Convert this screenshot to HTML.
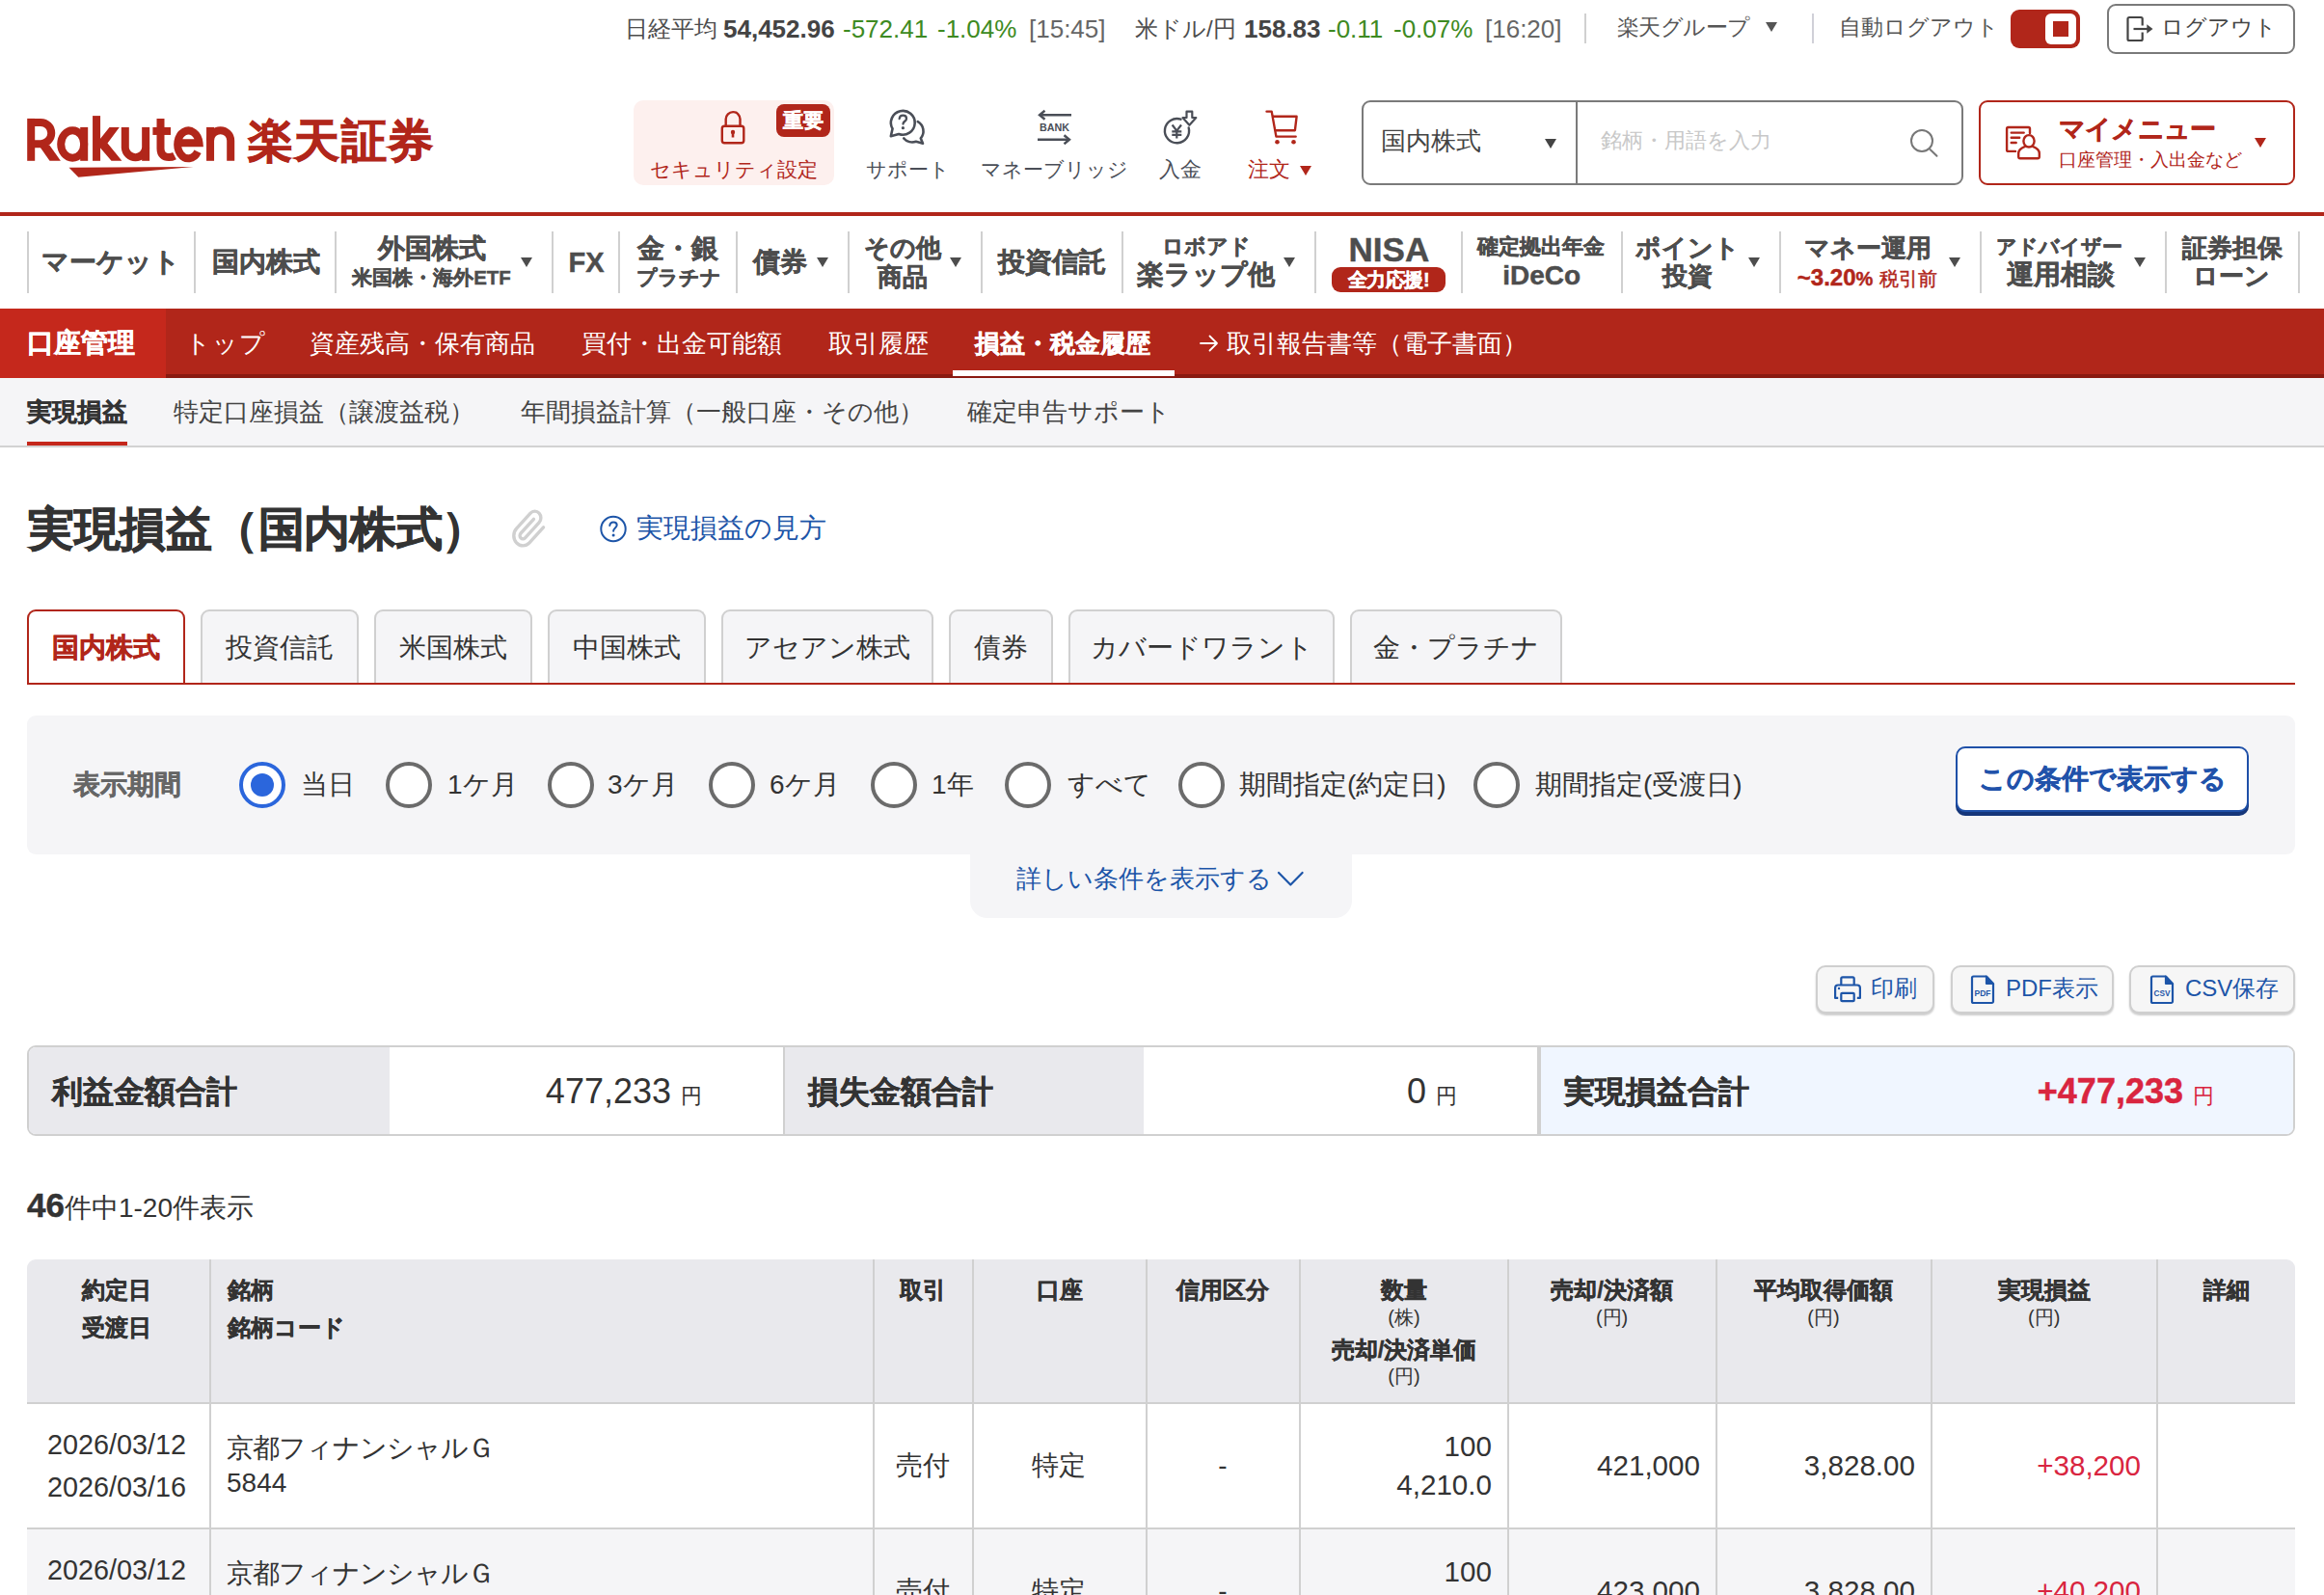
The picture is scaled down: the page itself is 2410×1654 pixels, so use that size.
<!DOCTYPE html>
<html lang="ja">
<head>
<meta charset="utf-8">
<title>実現損益（国内株式）</title>
<style>
html,body{margin:0;padding:0}
body{width:2410px;height:1654px;position:relative;overflow:hidden;background:#fff;font-family:"Liberation Sans",sans-serif;color:#333;-webkit-font-smoothing:antialiased}
.a{position:absolute;white-space:nowrap;margin:0;padding:0}
b,.b,.gn,.th{font-weight:bold;-webkit-text-stroke:.45px}
svg{position:absolute;overflow:visible}
/* ticker */
.tk{top:14px;height:32px;line-height:32px;font-size:26px;color:#4d4d4d}
.tk.j{font-size:24px}
.tk.g{color:#3d8a22}
.tk.t{color:#666}
.tk.n{color:#444;font-weight:bold}
.tr{top:11.500px;height:32px;line-height:32px;font-size:23px;color:#555}
/* header */
.hl{top:158px;height:36px;line-height:36px;font-size:22px;color:#4a4e57;text-align:center}
.red{color:#b1261a}
/* gnav */
.gs{top:240px;width:2px;height:64px;background:#d0d0d0}
.gn{font-weight:bold;color:#4d4d4d;text-align:center;line-height:30px}
.tri{width:0;height:0;border-left:6px solid transparent;border-right:6px solid transparent;border-top:10px solid #4d4d4d}
/* account nav */
.an{top:338px;height:36px;line-height:36px;font-size:26px;color:#fff}
.sn{top:409px;height:36px;line-height:36px;font-size:26px;color:#444}

/* main */
.tab{top:632px;height:74px;border:2px solid #d0d0d0;border-bottom:none;border-radius:9px 9px 0 0;background:#f5f5f7;font-size:28px;line-height:76px;text-align:center;color:#333;box-sizing:content-box}
.rad{top:790px;width:40px;height:40px;border:4px solid #6b6b6b;border-radius:50%;background:#fff}
.rl{top:796px;height:36px;line-height:36px;font-size:28px;color:#333}
.btn{top:1001px;height:46px;border:2px solid #cfcfcf;border-radius:10px;background:#f6f6f6;box-shadow:0 2px 2px rgba(0,0,0,.2)}
.bt{top:1007px;height:36px;line-height:36px;font-size:24px;color:#1d55a8}
.th{font-weight:bold;font-size:24px;color:#333;line-height:36px;height:36px}
.thu{font-size:20px;color:#333;line-height:28px;height:28px}
.vs{width:2px;background:#d0d0d0;top:1306px;height:348px}
.td{font-size:28px;color:#333;line-height:40px;height:40px}
.nm{font-size:29.600px}
.dt{font-size:28.800px}
.pl{color:#d9253f}
</style>
</head>
<body>

<!-- ===== top ticker ===== -->
<div class="a tk j" style="left:647.500px">日経平均</div>
<div class="a tk n" style="left:750px">54,452.96</div>
<div class="a tk g" style="left:874px">-572.41</div>
<div class="a tk g" style="left:972px">-1.04%</div>
<div class="a tk t" style="left:1067px">[15:45]</div>
<div class="a tk j" style="left:1177px">米ドル/円</div>
<div class="a tk n" style="left:1290px">158.83</div>
<div class="a tk g" style="left:1377px">-0.11</div>
<div class="a tk g" style="left:1445px">-0.07%</div>
<div class="a tk t" style="left:1540px">[16:20]</div>
<div class="a" style="left:1643px;top:14px;width:2px;height:31px;background:#d0d0d0"></div>
<div class="a tr" style="left:1677px;letter-spacing:-0.600px">楽天グループ</div>
<div class="a tri" style="left:1831px;top:23px;border-top-color:#555"></div>
<div class="a" style="left:1879px;top:14px;width:2px;height:31px;background:#d0d0d8"></div>
<div class="a tr" style="left:1907px">自動ログアウト</div>
<div class="a" style="left:2085px;top:10px;width:72px;height:40px;border-radius:9px;background:#b1261a"></div>
<div class="a" style="left:2121px;top:14px;width:32px;height:32px;border-radius:6px;background:#fff"></div>
<div class="a" style="left:2129px;top:22px;width:16px;height:16px;background:#b1261a"></div>
<div class="a" style="left:2185px;top:4px;width:191px;height:48px;border:2px solid #7a7a7a;border-radius:9px;background:#fff"></div>
<svg style="left:2204px;top:15px" width="30" height="30" viewBox="0 0 30 30" fill="none" stroke="#444" stroke-width="2.200" stroke-linecap="butt" stroke-linejoin="round"><path d="M17.700 11.500V4.500a1.500 1.500 0 0 0-1.500-1.500H4a1.500 1.500 0 0 0-1.500 1.500v21a1.500 1.500 0 0 0 1.500 1.500h12.200a1.500 1.500 0 0 0 1.500-1.500V18.500"/><path d="M8.500 15h15"/><path d="M22.300 10.200l6.200 4.800-6.200 4.800z" fill="#444" stroke="none"/></svg>
<div class="a tr" style="left:2241px;color:#444">ログアウト</div>

<!-- ===== logo ===== -->
<svg style="left:0;top:100px" width="470" height="100" viewBox="0 100 470 100" role="img" aria-label="Rakuten"><title>Rakuten</title>
  <g fill="none" stroke="#b1261a" stroke-width="8" stroke-linecap="butt" stroke-linejoin="miter">
    <path d="M32.200 122.900V166.800"/><path d="M32.200 126.900H42.100A11.150 11.150 0 0 1 42.100 149.200H32.200"/>
    <ellipse cx="75.200" cy="149.500" rx="12" ry="14.200"/><path d="M87.200 131.900V166.800"/>
    <path d="M100.050 120.100V166.800"/>
    <path d="M129.800 131.900V153.200A10.700 10.700 0 0 0 151.150 153.200"/><path d="M151.150 131.900V166.800"/>
    <path d="M166.500 122.900V154C166.500 160.500 170 163 175 163C177.300 163 179.300 162.500 181 161.600"/><path d="M158.400 135.950H177"/>
    <path d="M186.500 148.200H206.500A11.200 14.400 0 1 0 205 157.300"/>
    <path d="M218.050 131.900V166.800"/><path d="M218.050 145.700A10.575 10.575 0 0 1 239.200 145.700V166.800"/>
  </g>
  <g fill="#b1261a">
    <path d="M40.800 151.500L51.300 150.500L62.900 166.800H51.500z"/>
    <path d="M113.500 131.900H123.800L111.500 148.600L126.400 166.800H115.500L103.900 153.200V144.100z"/>
    <path d="M71.500 173.700L200.500 173L81.300 183.800z"/>
  </g>
</svg>
<div class="a b" style="left:256.500px;top:116px;height:60px;line-height:60px;font-size:47px;color:#b1261a;letter-spacing:1.500px;-webkit-text-stroke:1px #b1261a">楽天証券</div>

<!-- ===== header shortcuts ===== -->
<div class="a" style="left:657px;top:104px;width:208px;height:88px;border-radius:10px;background:#fdf0ee"></div>
<svg style="left:744px;top:112px" width="32" height="40" viewBox="744 112 32 40" fill="none" stroke="#b1261a" stroke-width="2.400"><path d="M752.700 130v-6.500a7.400 7.400 0 0 1 14.800 0V130"/><rect x="748.800" y="130.800" width="22.500" height="17.400" rx="2.500"/><circle cx="760" cy="137" r="2.200" fill="#b1261a" stroke="none"/><path d="M760 138v4.500" stroke-width="2.600"/></svg>
<div class="a b" style="left:805px;top:108px;width:56px;height:34px;border-radius:8px;background:#b1261a;color:#fff;font-size:21px;line-height:33px;text-align:center">重要</div>
<div class="a hl red" style="left:657px;width:208px;font-size:21px">セキュリティ設定</div>

<svg style="left:918px;top:112px" width="44" height="40" viewBox="918 112 44 40" fill="none" stroke="#4a4e57" stroke-width="2.600" stroke-linejoin="round" stroke-linecap="round"><path d="M925.560 133.500A12.400 12.400 0 1 1 932.060 138.950L923.800 141.200z"/><path d="M951.750 126.040A11.500 11.500 0 0 1 954.800 143.400L957 148.700L949.930 146.800A11.500 11.500 0 0 1 937.200 143.400"/><path d="M932.700 123c.2-2 1.700-3.300 3.700-3.300 2.100 0 3.600 1.300 3.600 3.200 0 2.800-3.500 2.900-3.500 5.700" stroke-width="2.300"/><circle cx="936.400" cy="132.700" r="1.600" fill="#4a4e57" stroke="none"/></svg>
<div class="a hl" style="left:891px;width:100px;font-size:21.300px">サポート</div>

<svg style="left:1070px;top:112px" width="48" height="40" viewBox="1070 112 48 40" fill="none" stroke="#4a4e57" stroke-width="2.400"><path d="M1111 119.300h-33"/><path d="M1083.500 114.800l-5.500 4.500 5.500 4.500" /><path d="M1076 144.700h33"/><path d="M1103.500 140.200l5.500 4.500-5.500 4.500"/><text x="1093.400" y="136.300" text-anchor="middle" font-family="Liberation Sans, sans-serif" font-weight="bold" font-size="11.500" fill="#4a4e57" stroke="none" textLength="31" lengthAdjust="spacingAndGlyphs">BANK</text></svg>
<div class="a hl" style="left:1008px;width:170px;font-size:21px">マネーブリッジ</div>

<svg style="left:1200px;top:112px" width="46" height="40" viewBox="1200 112 46 40" fill="none" stroke="#4a4e57" stroke-width="2.400" stroke-linejoin="round"><path d="M1224.500 123.700a12.600 12.600 0 1 0 8.200 8.800" stroke-linecap="round"/><path d="M1215.600 129.500l4.700 6.200 4.700-6.200M1215.300 136.300h10M1215.300 139.800h10M1220.300 135.700v7.800" stroke-width="2.200"/><path d="M1230.500 115.700h5.800v6.300h4l-6.900 7.800-6.900-7.800h4z" stroke-width="2.200"/></svg>
<div class="a hl" style="left:1174px;width:100px">入金</div>

<svg style="left:1308px;top:112px" width="42" height="40" viewBox="1308 112 42 40" fill="none" stroke="#b1261a" stroke-width="2.400" stroke-linejoin="round" stroke-linecap="round"><path d="M1313.500 115.600h5.200l4.700 26h20.300"/><path d="M1320.300 120.800h24.300l-1.700 14.400h-20"/><circle cx="1324.500" cy="147.200" r="2.300" fill="#b1261a" stroke="none"/><circle cx="1341.500" cy="147.200" r="2.300" fill="#b1261a" stroke="none"/></svg>
<div class="a hl red" style="left:1294px;text-align:left">注文</div>
<div class="a tri" style="left:1348px;top:172px;border-top-color:#b1261a"></div>

<!-- search -->
<div class="a" style="left:1412px;top:104px;width:620px;height:84px;border:2px solid #7a7a7a;border-radius:9px;background:#fff"></div>
<div class="a" style="left:1634px;top:104px;width:2px;height:88px;background:#7a7a7a"></div>
<div class="a" style="left:1432px;top:128px;height:36px;line-height:36px;font-size:26px;color:#444">国内株式</div>
<div class="a tri" style="left:1602px;top:144px;border-top-color:#444"></div>
<div class="a" style="left:1660px;top:128px;height:36px;line-height:36px;font-size:22px;color:#c8c8c8">銘柄・用語を入力</div>
<svg style="left:1978px;top:132px" width="34" height="34" viewBox="1978 132 34 34" fill="none" stroke="#777" stroke-width="2" stroke-linecap="round"><circle cx="1993" cy="146" r="11"/><path d="M2001.500 155l7 6.800"/></svg>

<!-- my menu -->
<div class="a" style="left:2052px;top:104px;width:324px;height:84px;border:2px solid #b1261a;border-radius:9px;background:#fff"></div>
<svg style="left:2078px;top:128px" width="40" height="40" viewBox="2078 128 40 40" fill="none" stroke="#b1261a" stroke-width="2.400" stroke-linejoin="round" stroke-linecap="round"><path d="M2105 138V133.500a1.500 1.500 0 0 0-1.500-1.500H2082.600a1.500 1.500 0 0 0-1.500 1.500V155.400a1.500 1.500 0 0 0 1.500 1.500H2090"/><path d="M2085.700 137.600h13M2085.700 142.800h8.500M2085.700 148h5"/><ellipse cx="2104" cy="146.300" rx="5.600" ry="6.200"/><path d="M2100 151.800c-3 1.200-6.800 3-6.800 7.200v3.400a1.800 1.800 0 0 0 1.800 1.800h18a1.800 1.800 0 0 0 1.800-1.800v-3.400c0-4.200-3.800-6-6.800-7.200"/></svg>
<div class="a b red" style="left:2135px;top:116px;height:36px;line-height:36px;font-size:26.500px;letter-spacing:-0.800px">マイメニュー</div>
<div class="a red" style="left:2135px;top:152px;height:28px;line-height:28px;font-size:18.700px">口座管理・入出金など</div>
<div class="a tri" style="left:2338px;top:143px;border-top-color:#b1261a"></div>

<!-- red rule -->
<div class="a" style="left:0;top:220px;width:2410px;height:4px;background:#b1261a"></div>

<!-- ===== global nav ===== -->
<div class="a gs" style="left:28px"></div>
<div class="a gs" style="left:201px"></div>
<div class="a gs" style="left:347px"></div>
<div class="a gs" style="left:572px"></div>
<div class="a gs" style="left:641px"></div>
<div class="a gs" style="left:763px"></div>
<div class="a gs" style="left:879px"></div>
<div class="a gs" style="left:1017px"></div>
<div class="a gs" style="left:1163px"></div>
<div class="a gs" style="left:1363px"></div>
<div class="a gs" style="left:1515px"></div>
<div class="a gs" style="left:1681px"></div>
<div class="a gs" style="left:1845px"></div>
<div class="a gs" style="left:2053px"></div>
<div class="a gs" style="left:2245px"></div>
<div class="a gs" style="left:2383px"></div>
<div class="a gn" style="left:-45px;width:320px;top:254px;height:36px;line-height:36px;font-size:28px;">マーケット</div>
<div class="a gn" style="left:115.5px;width:320px;top:254px;height:36px;line-height:36px;font-size:28px;">国内株式</div>
<div class="a gn" style="left:287.5px;width:320px;top:240px;height:36px;line-height:36px;font-size:28px;">外国株式</div>
<div class="a gn" style="left:287.5px;width:320px;top:270px;height:36px;line-height:36px;font-size:20.5px;">米国株・海外ETF</div>
<div class="a tri" style="left:540px;top:267px"></div>
<div class="a gn" style="left:448px;width:320px;top:254px;height:36px;line-height:36px;font-size:29px;">FX</div>
<div class="a gn" style="left:543px;width:320px;top:239.5px;height:36px;line-height:36px;font-size:28px;">金・銀</div>
<div class="a gn" style="left:543.8px;width:320px;top:269.5px;height:36px;line-height:36px;font-size:21px;">プラチナ</div>
<div class="a gn" style="left:649px;width:320px;top:254px;height:36px;line-height:36px;font-size:28px;">債券</div>
<div class="a tri" style="left:847px;top:267px"></div>
<div class="a gn" style="left:776.3px;width:320px;top:238.7px;height:36px;line-height:36px;font-size:26px;">その他</div>
<div class="a gn" style="left:776.4px;width:320px;top:269px;height:36px;line-height:36px;font-size:26px;">商品</div>
<div class="a tri" style="left:985px;top:267px"></div>
<div class="a gn" style="left:931px;width:320px;top:254px;height:36px;line-height:36px;font-size:28px;">投資信託</div>
<div class="a gn" style="left:1091px;width:320px;top:238px;height:36px;line-height:36px;font-size:22px;">ロボアド</div>
<div class="a gn" style="left:1090.7px;width:320px;top:267px;height:36px;line-height:36px;font-size:28px;">楽ラップ他</div>
<div class="a tri" style="left:1331px;top:267px"></div>
<div class="a gn" style="left:1280.4px;width:320px;top:239px;height:40px;line-height:40px;font-size:35px;">NISA</div>
<div class="a b" style="left:1381px;top:277px;width:118px;height:26px;border-radius:9px;background:#b1261a;color:#fff;font-size:20px;line-height:26px;text-align:center;letter-spacing:-0.5px">全力応援!</div>
<div class="a gn" style="left:1438.3px;width:320px;top:238px;height:36px;line-height:36px;font-size:22px;">確定拠出年金</div>
<div class="a gn" style="left:1438.6px;width:320px;top:267.5px;height:36px;line-height:36px;font-size:28px;">iDeCo</div>
<div class="a gn" style="left:1589.7px;width:320px;top:239px;height:36px;line-height:36px;font-size:26px;">ポイント</div>
<div class="a gn" style="left:1590px;width:320px;top:267.7px;height:36px;line-height:36px;font-size:26px;">投資</div>
<div class="a tri" style="left:1813px;top:267px"></div>
<div class="a gn" style="left:1776.7px;width:320px;top:239px;height:36px;line-height:36px;font-size:26px;">マネー運用</div>
<div class="a gn" style="left:1776.4px;width:320px;top:269.7px;height:36px;line-height:36px;font-size:24px;"><span class="red">~3.20<span style="font-size:20px">%</span> <span style="font-weight:normal;font-size:20px">税引前</span></span></div>
<div class="a tri" style="left:2020.5px;top:267px"></div>
<div class="a gn" style="left:1975.5px;width:320px;top:238px;height:36px;line-height:36px;font-size:21px;">アドバイザー</div>
<div class="a gn" style="left:1976.5px;width:320px;top:267.3px;height:36px;line-height:36px;font-size:28px;">運用相談</div>
<div class="a tri" style="left:2213px;top:267px"></div>
<div class="a gn" style="left:2154.8px;width:320px;top:239px;height:36px;line-height:36px;font-size:26px;">証券担保</div>
<div class="a gn" style="left:2153.7px;width:320px;top:267.7px;height:36px;line-height:36px;font-size:26px;">ローン</div>
<!-- ===== account nav ===== -->
<div class="a" style="left:0;top:320px;width:2410px;height:72px;background:#b1261a;box-shadow:inset 0 -4px 0 #8a1a11"></div>
<div class="a" style="left:0;top:320px;width:172px;height:72px;background:#c5281c"></div>
<div class="a an b" style="left:28px;font-size:28px">口座管理</div>
<div class="a an" style="left:192px;letter-spacing:1px">トップ</div>
<div class="a an" style="left:321px">資産残高・保有商品</div>
<div class="a an" style="left:603px">買付・出金可能額</div>
<div class="a an" style="left:859px">取引履歴</div>
<div class="a an b" style="left:1011px">損益・税金履歴</div>
<div class="a" style="left:988px;top:384px;width:230px;height:6px;background:#fff"></div>
<svg style="left:1243px;top:345px" width="22" height="22" viewBox="0 0 22 22" fill="none" stroke="#fff" stroke-width="1.8" stroke-linecap="round" stroke-linejoin="round"><path d="M2 11h17M11.500 3.500L19 11l-7.500 7.500"/></svg>
<div class="a an" style="left:1272px">取引報告書等（電子書面）</div>
<div class="a" style="left:0;top:392px;width:2410px;height:70px;background:#f5f5f7;border-bottom:2px solid #d2d2d2"></div>
<div class="a sn b" style="left:28px;color:#333">実現損益</div>
<div class="a" style="left:28px;top:458px;width:104px;height:4px;background:#c5281c"></div>
<div class="a sn" style="left:180px">特定口座損益（譲渡益税）</div>
<div class="a sn" style="left:540px">年間損益計算（一般口座・その他）</div>
<div class="a sn" style="left:1003px">確定申告サポート</div>
<!-- ===== main ===== -->
<div class="a b" style="left:29px;top:519px;height:60px;line-height:60px;font-size:48px;letter-spacing:-0.300px;-webkit-text-stroke:.8px;color:#333">実現損益（国内株式）</div>
<svg style="left:528px;top:524px" width="42" height="48" viewBox="528 524 42 48" fill="none" stroke="#d0d0d0" stroke-width="3.400" stroke-linecap="round" stroke-linejoin="round"><path vector-effect="non-scaling-stroke" transform="translate(529.640 527.730) scale(1.580 1.733)" d="M21.440 11.050l-9.190 9.190a6 6 0 0 1-8.490-8.490l9.190-9.190a4 4 0 0 1 5.660 5.660l-9.200 9.190a2 2 0 0 1-2.830-2.830l8.490-8.480"/></svg>
<svg style="left:620px;top:533px" width="32" height="32" viewBox="620 533 32 32" fill="none" stroke="#1d55a8" stroke-width="2" stroke-linecap="round"><circle cx="636" cy="548.500" r="12.700"/><path d="M632.300 545c.2-2.200 1.700-3.600 3.800-3.600s3.600 1.300 3.600 3.200c0 2.900-3.600 3.100-3.600 6.200"/><circle cx="636.100" cy="555" r="1.500" fill="#1d55a8" stroke="none"/></svg>
<div class="a" style="left:660px;top:530px;height:36px;line-height:36px;font-size:27.500px;color:#1d55a8">実現損益の見方</div>
<div class="a" style="left:28px;top:708px;width:2352px;height:2px;background:#b1261a"></div>
<div class="a tab b" style="left:28px;width:160px;border-color:#b1261a;background:#fff;color:#b1261a">国内株式</div>
<div class="a tab" style="left:208px;width:160px">投資信託</div>
<div class="a tab" style="left:388px;width:160px">米国株式</div>
<div class="a tab" style="left:568px;width:160px">中国株式</div>
<div class="a tab" style="left:748px;width:216px">アセアン株式</div>
<div class="a tab" style="left:984px;width:104px">債券</div>
<div class="a tab" style="left:1108px;width:272px">カバードワラント</div>
<div class="a tab" style="left:1400px;width:216px">金・プラチナ</div>
<div class="a" style="left:28px;top:742px;width:2352px;height:144px;border-radius:9px;background:#f5f5f7"></div>
<div class="a b" style="left:76px;top:796px;height:36px;line-height:36px;font-size:28px;color:#666">表示期間</div>
<div class="a rad" style="left:248px;border-color:#2b66dc"></div><div class="a" style="left:260px;top:802px;width:24px;height:24px;border-radius:50%;background:#2b66dc"></div>
<div class="a rl" style="left:312px">当日</div>
<div class="a rad" style="left:400px"></div><div class="a rl" style="left:464px">1ケ月</div>
<div class="a rad" style="left:568px"></div><div class="a rl" style="left:630px">3ケ月</div>
<div class="a rad" style="left:735px"></div><div class="a rl" style="left:798px">6ケ月</div>
<div class="a rad" style="left:903px"></div><div class="a rl" style="left:966px">1年</div>
<div class="a rad" style="left:1042px"></div><div class="a rl" style="left:1107px">すべて</div>
<div class="a rad" style="left:1222px"></div><div class="a rl" style="left:1285px">期間指定(約定日)</div>
<div class="a rad" style="left:1528px"></div><div class="a rl" style="left:1592px">期間指定(受渡日)</div>
<div class="a b" style="left:2028px;top:774px;width:300px;height:64px;border:2px solid #1f50a8;border-radius:10px;background:#fff;box-shadow:0 4px 0 #15367a;color:#2152aa;font-size:28px;line-height:64px;text-align:center">この条件で表示する</div>
<div class="a" style="left:1006px;top:886px;width:396px;height:66px;border-radius:0 0 18px 18px;background:#f5f5f7"></div>
<div class="a" style="left:1054px;top:893px;height:36px;line-height:36px;font-size:26px;color:#1d55a8">詳しい条件を表示する</div>
<svg style="left:1322px;top:898px" width="32" height="28" viewBox="1322 898 32 28" fill="none" stroke="#1d55a8" stroke-width="2.200" stroke-linecap="round" stroke-linejoin="round"><path d="M1326 905l12.300 12.500L1350.600 905"/></svg>
<div class="a btn" style="left:1883px;width:119px"></div><div class="a btn" style="left:2023px;width:165px"></div><div class="a btn" style="left:2208px;width:168px"></div>
<svg style="left:1900px;top:1010px" width="32" height="32" viewBox="1900 1010 32 32" fill="none" stroke="#1d55a8" stroke-width="2.200" stroke-linejoin="round"><path d="M1909.300 1021V1014.800a1.500 1.500 0 0 1 1.500-1.500h10.400a1.500 1.500 0 0 1 1.500 1.500V1021"/><path d="M1906.200 1034.900H1903.100V1024.500a3 3 0 0 1 3-3H1925.900a3 3 0 0 1 3 3V1034.900H1925.800"/><rect x="1909.300" y="1029.800" width="13.400" height="8.400" rx="1"/><circle cx="1907" cy="1025" r="1.200" fill="#1d55a8" stroke="none"/></svg>
<div class="a bt" style="left:1940px">印刷</div>
<svg style="left:2042px;top:1010px" width="28" height="32" viewBox="0 0 28 32" fill="none" stroke="#1d55a8" stroke-width="2.200" stroke-linejoin="round"><path d="M18 2.500H4.500A1.500 1.500 0 0 0 3 4v24.500a1.500 1.500 0 0 0 1.500 1.500h19a1.500 1.500 0 0 0 1.500-1.500V10"/><path d="M18 2.500l7 7.500h-7z" fill="#1d55a8"/><text x="14" y="22.500" text-anchor="middle" font-family="Liberation Sans, sans-serif" font-weight="bold" font-size="9.500" fill="#1d55a8" stroke="none" textLength="17" lengthAdjust="spacingAndGlyphs">PDF</text></svg>
<div class="a bt" style="left:2080px">PDF表示</div>
<svg style="left:2228px;top:1010px" width="28" height="32" viewBox="0 0 28 32" fill="none" stroke="#1d55a8" stroke-width="2.200" stroke-linejoin="round"><path d="M18 2.500H4.500A1.500 1.500 0 0 0 3 4v24.500a1.500 1.500 0 0 0 1.500 1.500h19a1.500 1.500 0 0 0 1.500-1.500V10"/><path d="M18 2.500l7 7.500h-7z" fill="#1d55a8"/><text x="14" y="22.500" text-anchor="middle" font-family="Liberation Sans, sans-serif" font-weight="bold" font-size="9.500" fill="#1d55a8" stroke="none" textLength="17" lengthAdjust="spacingAndGlyphs">CSV</text></svg>
<div class="a bt" style="left:2266px">CSV保存</div>
<div class="a" style="left:28px;top:1084px;width:2348px;height:90px;border:2px solid #d0d0d0;border-radius:9px;background:#fff;overflow:hidden"><div class="a" style="left:0;top:0;width:374px;height:90px;background:#e9e9ed"></div><div class="a" style="left:782px;top:0;width:2px;height:90px;background:#d0d0d0"></div><div class="a" style="left:784px;top:0;width:372px;height:90px;background:#e9e9ed"></div><div class="a" style="left:1564px;top:0;width:4px;height:90px;background:#d0d0d0"></div><div class="a" style="left:1568px;top:0;width:780px;height:90px;background:#f0f6ff"></div></div>
<div class="a b" style="left:54px;top:1112px;height:40px;line-height:40px;font-size:32px;color:#333">利益金額合計</div>
<div class="a" style="left:428px;width:300px;text-align:right;top:1110px;height:44px;line-height:44px;font-size:36px;color:#333">477,233 <span style="font-size:22px">円</span></div>
<div class="a b" style="left:838px;top:1112px;height:40px;line-height:40px;font-size:32px;color:#333">損失金額合計</div>
<div class="a" style="left:1211px;width:300px;text-align:right;top:1110px;height:44px;line-height:44px;font-size:36px;color:#333">0 <span style="font-size:22px">円</span></div>
<div class="a b" style="left:1622px;top:1112px;height:40px;line-height:40px;font-size:32px;color:#333">実現損益合計</div>
<div class="a pl" style="left:1996px;width:300px;text-align:right;top:1110px;height:44px;line-height:44px;font-size:36px"><b>+477,233</b> <span style="font-size:22px">円</span></div>
<div class="a" style="left:28px;top:1228px;height:44px;line-height:44px;font-size:28px;color:#333"><b style="font-size:35px">46</b>件中1-20件表示</div>
<div class="a" style="left:28px;top:1306px;width:2352px;height:148px;background:#e9e9ed;border-radius:9px 9px 0 0"></div>
<div class="a" style="left:28px;top:1454px;width:2352px;height:2px;background:#d0d0d0"></div>
<div class="a" style="left:28px;top:1584px;width:2352px;height:2px;background:#d0d0d0"></div>
<div class="a" style="left:28px;top:1586px;width:2352px;height:68px;background:#f5f5f7"></div>
<div class="a vs" style="left:217px"></div>
<div class="a vs" style="left:905px"></div>
<div class="a vs" style="left:1008px"></div>
<div class="a vs" style="left:1188px"></div>
<div class="a vs" style="left:1347px"></div>
<div class="a vs" style="left:1563px"></div>
<div class="a vs" style="left:1779px"></div>
<div class="a vs" style="left:2002px"></div>
<div class="a vs" style="left:2236px"></div>
<div class="a th" style="left:-29px;width:300px;text-align:center;top:1320px">約定日</div>
<div class="a th" style="left:-29px;width:300px;text-align:center;top:1359px">受渡日</div>
<div class="a th" style="left:236px;top:1320px">銘柄</div><div class="a th" style="left:236px;top:1359px">銘柄コード</div>
<div class="a th" style="left:807px;width:300px;text-align:center;top:1320px">取引</div>
<div class="a th" style="left:948.5px;width:300px;text-align:center;top:1320px">口座</div>
<div class="a th" style="left:1117.5px;width:300px;text-align:center;top:1320px">信用区分</div>
<div class="a th" style="left:1306px;width:300px;text-align:center;top:1320px">数量</div>
<div class="a thu" style="left:1306px;width:300px;text-align:center;top:1351.5px">(株)</div>
<div class="a th" style="left:1306px;width:300px;text-align:center;top:1381.5px">売却/決済単価</div>
<div class="a thu" style="left:1306px;width:300px;text-align:center;top:1413px">(円)</div>
<div class="a th" style="left:1521.6px;width:300px;text-align:center;top:1320px">売却/決済額</div>
<div class="a thu" style="left:1521.6px;width:300px;text-align:center;top:1351.5px">(円)</div>
<div class="a th" style="left:1741px;width:300px;text-align:center;top:1320px">平均取得価額</div>
<div class="a thu" style="left:1741px;width:300px;text-align:center;top:1351.5px">(円)</div>
<div class="a th" style="left:1969.7px;width:300px;text-align:center;top:1320px">実現損益</div>
<div class="a thu" style="left:1969.7px;width:300px;text-align:center;top:1351.5px">(円)</div>
<div class="a th" style="left:2158.6px;width:300px;text-align:center;top:1320px">詳細</div>
<div class="a td dt" style="left:49px;top:1478px">2026/03/12</div><div class="a td dt" style="left:49px;top:1522px">2026/03/16</div>
<div class="a td" style="left:235px;top:1482px;letter-spacing:-1px">京都フィナンシャルＧ</div><div class="a td" style="left:235px;top:1518px">5844</div>
<div class="a td" style="left:807px;width:300px;text-align:center;top:1500px">売付</div><div class="a td" style="left:948px;width:300px;text-align:center;top:1500px">特定</div>
<div class="a td" style="left:1118px;width:300px;text-align:center;top:1500px">-</div>
<div class="a td nm" style="left:1247px;width:300px;text-align:right;top:1480px">100</div><div class="a td nm" style="left:1247px;width:300px;text-align:right;top:1520px">4,210.0</div>
<div class="a td nm" style="left:1463px;width:300px;text-align:right;top:1500px">421,000</div>
<div class="a td nm" style="left:1686px;width:300px;text-align:right;top:1500px">3,828.00</div>
<div class="a td nm pl" style="left:1920px;width:300px;text-align:right;top:1500px">+38,200</div>
<div class="a td dt" style="left:49px;top:1608px">2026/03/12</div><div class="a td dt" style="left:49px;top:1652px">2026/03/16</div>
<div class="a td" style="left:235px;top:1612px;letter-spacing:-1px">京都フィナンシャルＧ</div><div class="a td" style="left:235px;top:1648px">5844</div>
<div class="a td" style="left:807px;width:300px;text-align:center;top:1630px">売付</div><div class="a td" style="left:948px;width:300px;text-align:center;top:1630px">特定</div>
<div class="a td" style="left:1118px;width:300px;text-align:center;top:1630px">-</div>
<div class="a td nm" style="left:1247px;width:300px;text-align:right;top:1610px">100</div><div class="a td nm" style="left:1247px;width:300px;text-align:right;top:1650px">4,230.0</div>
<div class="a td nm" style="left:1463px;width:300px;text-align:right;top:1630px">423,000</div>
<div class="a td nm" style="left:1686px;width:300px;text-align:right;top:1630px">3,828.00</div>
<div class="a td nm pl" style="left:1920px;width:300px;text-align:right;top:1630px">+40,200</div>
</body>
</html>
